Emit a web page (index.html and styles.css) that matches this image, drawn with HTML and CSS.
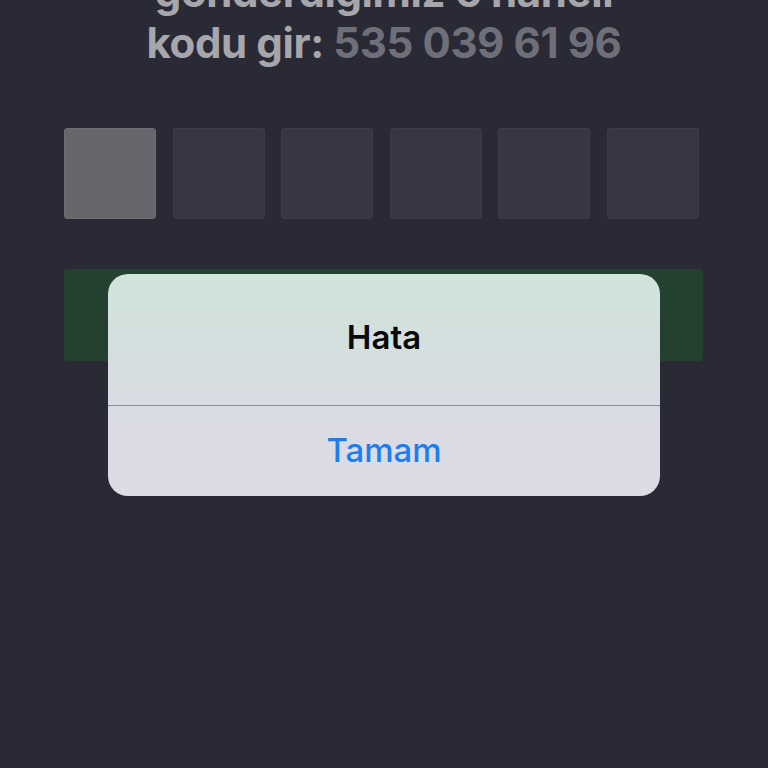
FILE: index.html
```html
<!DOCTYPE html>
<html lang="tr">
<head>
<meta charset="utf-8">
<title>Doğrulama</title>
<link rel="stylesheet" href="styles.css">
</head>
<body>
<main class="screen">
  <h1 class="heading">gönderdiğimiz 6 haneli<br>kodu gir: <span class="phone">535 039 61 96</span></h1>
  <div class="code-row">
    <div class="code-box active"></div>
    <div class="code-box"></div>
    <div class="code-box"></div>
    <div class="code-box"></div>
    <div class="code-box"></div>
    <div class="code-box"></div>
  </div>
  <div class="submit"></div>
</main>
<div class="alert">
  <div class="alert-title">Hata</div>
  <div class="alert-action">Tamam</div>
</div>
</body>
</html>
```
FILE: styles.css
```css
html, body {
  margin: 0;
  padding: 0;
}
body {
  background: #2a2a36;
  width: 768px;
  height: 768px;
  overflow: hidden;
  font-family: Inter, "Liberation Sans", sans-serif;
  position: relative;
}
.screen {
  display: flex;
  flex-direction: column;
  padding-left: 64px;
}
.heading {
  margin: -34px 0 0 -64px;
  width: 768px;
  text-align: center;
  font-size: 42px;
  line-height: 51px;
  font-weight: 700;
  color: #a6a6ab;
  letter-spacing: -0.4px;
}
.phone {
  color: #6f6f7a;
}
.code-row {
  margin-top: 60px;
  width: 635px;
  display: flex;
  justify-content: space-between;
}
.code-box {
  width: 92px;
  height: 91px;
  box-sizing: border-box;
  border-radius: 3px;
  background: #373743;
  border: 1px solid #3d3d4a;
}
.code-box.active {
  background: #66676d;
  border-color: #6c6d73;
}
.submit {
  margin-top: 50px;
  width: 639px;
  height: 92px;
  border-radius: 4px;
  background: #24402f;
}
.alert {
  position: absolute;
  left: 108px;
  top: 274px;
  width: 552px;
  height: 222px;
  border-radius: 20px;
  overflow: hidden;
  display: flex;
  flex-direction: column;
  background: linear-gradient(180deg, #cfe4db 0%, #d6dde0 45%, #dadbe3 65%, #dcdce5 100%);
}
.alert-title {
  height: 132px;
  box-sizing: border-box;
  display: flex;
  align-items: center;
  justify-content: center;
  padding-bottom: 6px;
  font-size: 33px;
  font-weight: 600;
  color: #0a0a0a;
  border-bottom: 1px solid #8c8c9a;
}
.alert-action {
  flex: 1;
  display: flex;
  align-items: center;
  justify-content: center;
  padding-bottom: 2px;
  font-size: 33px;
  font-weight: 500;
  color: #1b7ff0;
}
```
